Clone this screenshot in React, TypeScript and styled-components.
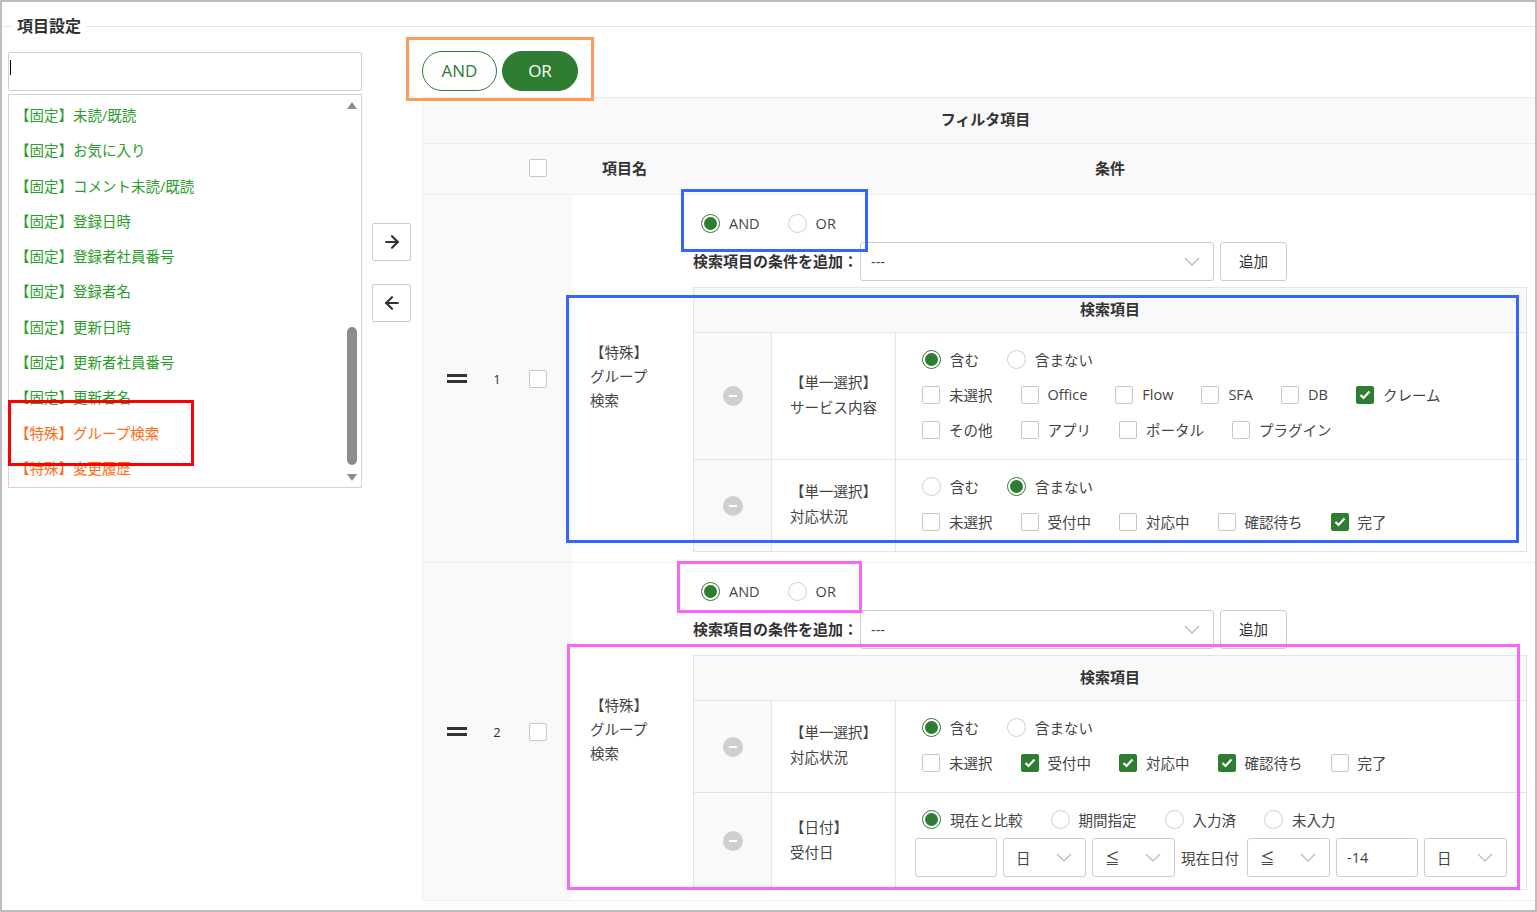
import React from "react";
import styled, { createGlobalStyle, css } from "styled-components";
import { ArrowLeft, ArrowRight } from "lucide-react";

const GREEN = "#2e7d32";
const LINE = "#e3e3e3";
const COLS = "67px 14px 68px 121px 834px 1fr";

const GlobalStyle = createGlobalStyle`
  html, body { margin: 0; padding: 0; background: #fff; }
  body {
    font-family: "Open Sans", "Noto Sans CJK JP", sans-serif;
    color: #444;
    -webkit-font-smoothing: antialiased;
  }
  * { box-sizing: border-box; }
`;

const Frame = styled.div`
  position: relative;
  width: 1537px;
  height: 912px;
  border: 2px solid #bdbdbd;
  overflow: hidden;
  background: #fff;
`;

const LegendRow = styled.div`
  display: flex;
  align-items: center;
  height: 20px;
  margin-top: 14px;
  &::before {
    content: "";
    width: 10px;
    border-top: 1px solid #e6e6e6;
  }
  &::after {
    content: "";
    flex: 1;
    border-top: 1px solid #e6e6e6;
  }
`;

const Legend = styled.span`
  padding: 0 5px 2px;
  font-size: 16px;
  font-weight: 700;
  color: #333;
`;

const Body = styled.div`
  display: flex;
  align-items: flex-start;
`;

/* ---------- left list ---------- */

const LeftPanel = styled.div`
  width: 354px;
  margin: 16px 0 0 6px;
`;

const SearchField = styled.div`
  height: 39px;
  border: 1px solid #cfcfcf;
  border-radius: 2px;
  padding: 7px 0 0 1px;
`;

const Caret = styled.span`
  display: block;
  width: 1px;
  height: 15px;
  background: #000;
`;

const ListBox = styled.div`
  position: relative;
  display: flex;
  margin-top: 3px;
  height: 394px;
  border: 1px solid #d3d3d3;
`;

const ItemList = styled.ul`
  flex: 1;
  margin: 0;
  padding: 3px 0 0 6px;
  list-style: none;
  overflow: hidden;
`;

const ListItem = styled.li<{ $special?: boolean }>`
  height: 35.3px;
  line-height: 35.3px;
  font-size: 14.5px;
  white-space: nowrap;
  color: ${(p) => (p.$special ? "#ff6a13" : "#2a9d2a")};
`;

const ScrollBar = styled.div`
  width: 18px;
  display: flex;
  flex-direction: column;
  align-items: center;
  padding: 7px 0 6px;
`;

const ScrollArrow = styled.span<{ $down?: boolean }>`
  width: 0;
  height: 0;
  border-left: 5px solid transparent;
  border-right: 5px solid transparent;
  ${(p) =>
    p.$down
      ? css`border-top: 7px solid #8c8c8c;`
      : css`border-bottom: 7px solid #8c8c8c;`}
`;

const ThumbTrack = styled.div`
  flex: 1;
  display: flex;
  flex-direction: column;
  justify-content: flex-end;
  padding-bottom: 9px;
`;

const Thumb = styled.span`
  width: 10px;
  height: 138px;
  border-radius: 5px;
  background: #8c8c8c;
`;

/* ---------- move buttons ---------- */

const ArrowColumn = styled.div`
  display: flex;
  flex-direction: column;
  gap: 23px;
  margin: 187px 0 0 10px;
`;

const ArrowButton = styled.button`
  width: 39px;
  height: 38px;
  padding: 0;
  display: flex;
  align-items: center;
  justify-content: center;
  background: #fff;
  border: 1px solid #ccc;
  border-radius: 2px;
  color: #333;
`;

/* ---------- right side ---------- */

const RightPanel = styled.div`
  flex: 1;
  min-width: 0;
  margin-left: 11px;
`;

const ToggleBar = styled.div`
  position: relative;
  display: flex;
  gap: 5px;
  margin-top: 15px;
`;

const Pill = styled.button<{ $active?: boolean; $w: number }>`
  width: ${(p) => p.$w}px;
  height: 40px;
  padding: 0 0 2px;
  border-radius: 20px;
  border: 1.5px solid ${GREEN};
  background: ${(p) => (p.$active ? GREEN : "#fff")};
  color: ${(p) => (p.$active ? "#fff" : GREEN)};
  font-family: inherit;
  font-size: 17px;
`;

const Annotation = styled.div<{
  $color: string;
  $top: number;
  $left: number;
  $w: number;
  $h: number;
}>`
  position: absolute;
  top: ${(p) => p.$top}px;
  left: ${(p) => p.$left}px;
  width: ${(p) => p.$w}px;
  height: ${(p) => p.$h}px;
  border: 3px solid ${(p) => p.$color};
  pointer-events: none;
  z-index: 2;
`;

const Table = styled.div`
  margin-top: 6px;
  border-top: 1px solid #ececec;
  border-left: 1px solid #efefef;
`;

const HeadTitle = styled.div`
  height: 46px;
  display: flex;
  align-items: center;
  justify-content: center;
  padding: 0 0 4px 13px;
  background: #f9f9f9;
  border-bottom: 1px solid #ececec;
  font-size: 15px;
  font-weight: 700;
  color: #333;
`;

const HeadRow = styled.div`
  display: grid;
  grid-template-columns: ${COLS};
  height: 51px;
  align-items: center;
  background: #f9f9f9;
  border-bottom: 1px solid #ececec;
  font-size: 15px;
  font-weight: 700;
  color: #333;
`;

const HeadCell = styled.div<{ $center?: boolean }>`
  display: flex;
  justify-content: ${(p) => (p.$center ? "center" : "flex-start")};
  padding-left: ${(p) => (p.$center ? 0 : 30)}px;
  padding-bottom: 3px;
`;

const BodyRow = styled.div`
  position: relative;
  display: grid;
  grid-template-columns: ${COLS};
  border-bottom: 1px solid #eee;
`;

const ShadeCell = styled.div`
  display: flex;
  align-items: center;
  justify-content: center;
  background: #f9f9f9;
`;

const Handle = styled.span`
  width: 20px;
  height: 9px;
  border-top: 3px solid #333;
  border-bottom: 3px solid #333;
`;

const RowNum = styled.span`
  font-size: 13px;
  color: #333;
`;

const NameCell = styled.div`
  display: flex;
  align-items: center;
  padding: 0 0 3px 18px;
`;

const NameText = styled.div`
  max-width: 64px;
  font-size: 14.5px;
  line-height: 24px;
  color: #444;
`;

const CondCell = styled.div`
  display: flex;
  flex-direction: column;
  align-items: flex-start;
  padding-bottom: 10px;
`;

const RadioLine = styled.div`
  display: flex;
  align-items: center;
  height: 32px;
  margin-top: 12px;
  padding-left: 8px;
`;

const Choice = styled.label`
  display: inline-flex;
  align-items: center;
  gap: 9px;
  margin-right: 28px;
  font-size: 14.5px;
  color: #444;
  white-space: nowrap;
`;

const RadioMark = styled.span<{ $on?: boolean }>`
  position: relative;
  flex: none;
  width: 19px;
  height: 19px;
  border-radius: 50%;
  background: #fff;
  border: 1px solid #cfcfcf;
  ${(p) =>
    p.$on &&
    css`
      border: 1.5px solid ${GREEN};
      &::after {
        content: "";
        position: absolute;
        inset: 2px;
        border-radius: 50%;
        background: ${GREEN};
      }
    `}
`;

const CheckMark = styled.span<{ $on?: boolean }>`
  flex: none;
  width: 18px;
  height: 18px;
  display: flex;
  align-items: center;
  justify-content: center;
  border-radius: 2px;
  border: 1px solid ${(p) => (p.$on ? GREEN : "#c8c8c8")};
  background: ${(p) => (p.$on ? GREEN : "#fff")};
`;

const AddLine = styled.div`
  display: flex;
  align-items: center;
  height: 39px;
  margin-top: 3px;
`;

const AddLabel = styled.span`
  width: 167px;
  padding-bottom: 2px;
  font-size: 15px;
  font-weight: 700;
  color: #333;
  white-space: nowrap;
`;

const SelectBox = styled.div<{ $w: number }>`
  flex: none;
  width: ${(p) => p.$w}px;
  height: 39px;
  display: flex;
  align-items: center;
  justify-content: space-between;
  padding: 0 13px 0 ${(p) => (p.$w > 100 ? 10 : 12)}px;
  border: 1px solid #ccc;
  border-radius: 3px;
  background: #fff;
  font-size: 14.5px;
  color: #444;
`;

const AddButton = styled.button`
  width: 67px;
  height: 39px;
  margin-left: 6px;
  padding: 0 0 2px;
  border: 1px solid #ccc;
  border-radius: 3px;
  background: #fff;
  font-family: inherit;
  font-size: 14.5px;
  color: #333;
`;

const Nested = styled.div`
  display: grid;
  grid-template-columns: 78px 124px 1fr;
  width: 834px;
  margin-top: 6px;
  border: 1px solid ${LINE};
  border-bottom: none;
`;

const NestedHead = styled.div`
  grid-column: 1 / -1;
  height: 45px;
  display: flex;
  align-items: center;
  justify-content: center;
  padding-bottom: 4px;
  background: #f8f9fa;
  border-bottom: 1px solid ${LINE};
  font-size: 15px;
  font-weight: 700;
  color: #333;
`;

const MinusCell = styled.div`
  display: flex;
  align-items: center;
  justify-content: center;
  background: #f8f9fa;
  border-right: 1px solid ${LINE};
  border-bottom: 1px solid ${LINE};
`;

const MinusIcon = styled.span`
  position: relative;
  width: 20px;
  height: 20px;
  border-radius: 50%;
  background: #cfcfcf;
  &::after {
    content: "";
    position: absolute;
    left: 6px;
    top: 9px;
    width: 8px;
    height: 2px;
    background: #fff;
  }
`;

const LabelCell = styled.div`
  display: flex;
  flex-direction: column;
  justify-content: center;
  padding: 0 0 3px 18px;
  border-right: 1px solid ${LINE};
  border-bottom: 1px solid ${LINE};
  font-size: 14.5px;
  line-height: 25px;
  color: #444;
  white-space: nowrap;
`;

const OptionsCell = styled.div`
  padding: 9px 0 12px 26px;
  border-bottom: 1px solid ${LINE};
`;

const OptionLine = styled.div`
  display: flex;
  align-items: center;
  height: 35px;
`;

const InputsLine = styled.div`
  display: flex;
  align-items: center;
  gap: 6px;
  height: 39px;
  margin: 1px 0 0 -7px;
`;

const DateInput = styled.div`
  width: 82px;
  height: 39px;
  display: flex;
  align-items: center;
  padding-left: 10px;
  border: 1px solid #ccc;
  border-radius: 3px;
  font-size: 14.5px;
  color: #444;
`;

const InlineText = styled.span`
  width: 60px;
  font-size: 14.5px;
  color: #444;
  white-space: nowrap;
`;

/* ---------- small parts ---------- */

const Chevron = () => (
  <svg width="16" height="9" viewBox="0 0 16 9">
    <polyline points="1,1 8,8 15,1" fill="none" stroke="#bdbdbd" strokeWidth="1.3" />
  </svg>
);

const Tick = () => (
  <svg width="12" height="10" viewBox="0 0 12 10">
    <polyline points="1.5,5 4.5,8 10.5,1.5" fill="none" stroke="#fff" strokeWidth="2.2" />
  </svg>
);

const Radio = ({ label, on }: { label: string; on?: boolean }) => (
  <Choice>
    <RadioMark $on={on} />
    {label}
  </Choice>
);

const Check = ({ label, on }: { label: string; on?: boolean }) => (
  <Choice>
    <CheckMark $on={on}>{on && <Tick />}</CheckMark>
    {label}
  </Choice>
);

const Select = ({ value, w }: { value: string; w: number }) => (
  <SelectBox $w={w}>
    <span>{value}</span>
    <Chevron />
  </SelectBox>
);

/* ---------- data ---------- */

type Box = { color: string; top: number; left: number; w: number; h: number };

type Cond =
  | { kind: "choice"; tag: string; name: string; include: boolean; lines: [string, boolean][][] }
  | { kind: "date"; tag: string; name: string };

type Group = { no: number; conds: Cond[]; marks: Box[] };

const listItems: [string, boolean][] = [
  ["【固定】未読/既読", false],
  ["【固定】お気に入り", false],
  ["【固定】コメント未読/既読", false],
  ["【固定】登録日時", false],
  ["【固定】登録者社員番号", false],
  ["【固定】登録者名", false],
  ["【固定】更新日時", false],
  ["【固定】更新者社員番号", false],
  ["【固定】更新者名", false],
  ["【特殊】グループ検索", true],
  ["【特殊】変更履歴", true],
];

const groups: Group[] = [
  {
    no: 1,
    conds: [
      {
        kind: "choice",
        tag: "【単一選択】",
        name: "サービス内容",
        include: true,
        lines: [
          [["未選択", false], ["Office", false], ["Flow", false], ["SFA", false], ["DB", false], ["クレーム", true]],
          [["その他", false], ["アプリ", false], ["ポータル", false], ["プラグイン", false]],
        ],
      },
      {
        kind: "choice",
        tag: "【単一選択】",
        name: "対応状況",
        include: false,
        lines: [[["未選択", false], ["受付中", false], ["対応中", false], ["確認待ち", false], ["完了", true]]],
      },
    ],
    marks: [
      { color: "#3366ff", top: -6, left: 258, w: 187, h: 63 },
      { color: "#3366ff", top: 100, left: 143, w: 953, h: 248 },
    ],
  },
  {
    no: 2,
    conds: [
      {
        kind: "choice",
        tag: "【単一選択】",
        name: "対応状況",
        include: true,
        lines: [[["未選択", false], ["受付中", true], ["対応中", true], ["確認待ち", true], ["完了", false]]],
      },
      { kind: "date", tag: "【日付】", name: "受付日" },
    ],
    marks: [
      { color: "#fb63fb", top: -2, left: 254, w: 185, h: 52 },
      { color: "#fb63fb", top: 81, left: 144, w: 953, h: 246 },
    ],
  },
];

/* ---------- sections ---------- */

const CondOptions = ({ cond }: { cond: Cond }) => {
  if (cond.kind === "date") {
    return (
      <OptionsCell>
        <OptionLine>
          <Radio label="現在と比較" on />
          <Radio label="期間指定" />
          <Radio label="入力済" />
          <Radio label="未入力" />
        </OptionLine>
        <InputsLine>
          <DateInput />
          <Select value="日" w={83} />
          <Select value="≦" w={83} />
          <InlineText>現在日付</InlineText>
          <Select value="≦" w={83} />
          <DateInput>-14</DateInput>
          <Select value="日" w={83} />
        </InputsLine>
      </OptionsCell>
    );
  }
  return (
    <OptionsCell>
      <OptionLine>
        <Radio label="含む" on={cond.include} />
        <Radio label="含まない" on={!cond.include} />
      </OptionLine>
      {cond.lines.map((line, i) => (
        <OptionLine key={i}>
          {line.map(([label, on]) => (
            <Check key={label} label={label} on={on} />
          ))}
        </OptionLine>
      ))}
    </OptionsCell>
  );
};

const GroupRow = ({ group }: { group: Group }) => (
  <BodyRow>
    <ShadeCell>
      <Handle />
    </ShadeCell>
    <ShadeCell>
      <RowNum>{group.no}</RowNum>
    </ShadeCell>
    <ShadeCell>
      <CheckMark />
    </ShadeCell>
    <NameCell>
      <NameText>【特殊】グループ検索</NameText>
    </NameCell>
    <CondCell>
      <RadioLine>
        <Radio label="AND" on />
        <Radio label="OR" />
      </RadioLine>
      <AddLine>
        <AddLabel>検索項目の条件を追加：</AddLabel>
        <Select value="---" w={354} />
        <AddButton>追加</AddButton>
      </AddLine>
      <Nested>
        <NestedHead>検索項目</NestedHead>
        {group.conds.map((cond, i) => (
          <React.Fragment key={i}>
            <MinusCell>
              <MinusIcon />
            </MinusCell>
            <LabelCell>
              <span>{cond.tag}</span>
              <span>{cond.name}</span>
            </LabelCell>
            <CondOptions cond={cond} />
          </React.Fragment>
        ))}
      </Nested>
    </CondCell>
    <div />
    {group.marks.map((m, i) => (
      <Annotation key={i} $color={m.color} $top={m.top} $left={m.left} $w={m.w} $h={m.h} />
    ))}
  </BodyRow>
);

export default function App() {
  return (
    <>
      <GlobalStyle />
      <Frame>
        <LegendRow>
          <Legend>項目設定</Legend>
        </LegendRow>
        <Body>
          <LeftPanel>
            <SearchField>
              <Caret />
            </SearchField>
            <ListBox>
              <ItemList>
                {listItems.map(([label, special]) => (
                  <ListItem key={label} $special={special}>
                    {label}
                  </ListItem>
                ))}
              </ItemList>
              <ScrollBar>
                <ScrollArrow />
                <ThumbTrack>
                  <Thumb />
                </ThumbTrack>
                <ScrollArrow $down />
              </ScrollBar>
              <Annotation $color="#ff0000" $top={305} $left={-1} $w={186} $h={66} />
            </ListBox>
          </LeftPanel>

          <ArrowColumn>
            <ArrowButton>
              <ArrowRight size={20} strokeWidth={2.6} />
            </ArrowButton>
            <ArrowButton>
              <ArrowLeft size={20} strokeWidth={2.6} />
            </ArrowButton>
          </ArrowColumn>

          <RightPanel>
            <ToggleBar>
              <Pill $w={75}>AND</Pill>
              <Pill $w={76} $active>
                OR
              </Pill>
              <Annotation $color="#ff9a5e" $top={-14} $left={-16} $w={188} $h={64} />
            </ToggleBar>
            <Table>
              <HeadTitle>フィルタ項目</HeadTitle>
              <HeadRow>
                <div />
                <div />
                <HeadCell $center>
                  <CheckMark />
                </HeadCell>
                <HeadCell>項目名</HeadCell>
                <HeadCell $center>条件</HeadCell>
                <div />
              </HeadRow>
              {groups.map((g) => (
                <GroupRow key={g.no} group={g} />
              ))}
            </Table>
          </RightPanel>
        </Body>
      </Frame>
    </>
  );
}
